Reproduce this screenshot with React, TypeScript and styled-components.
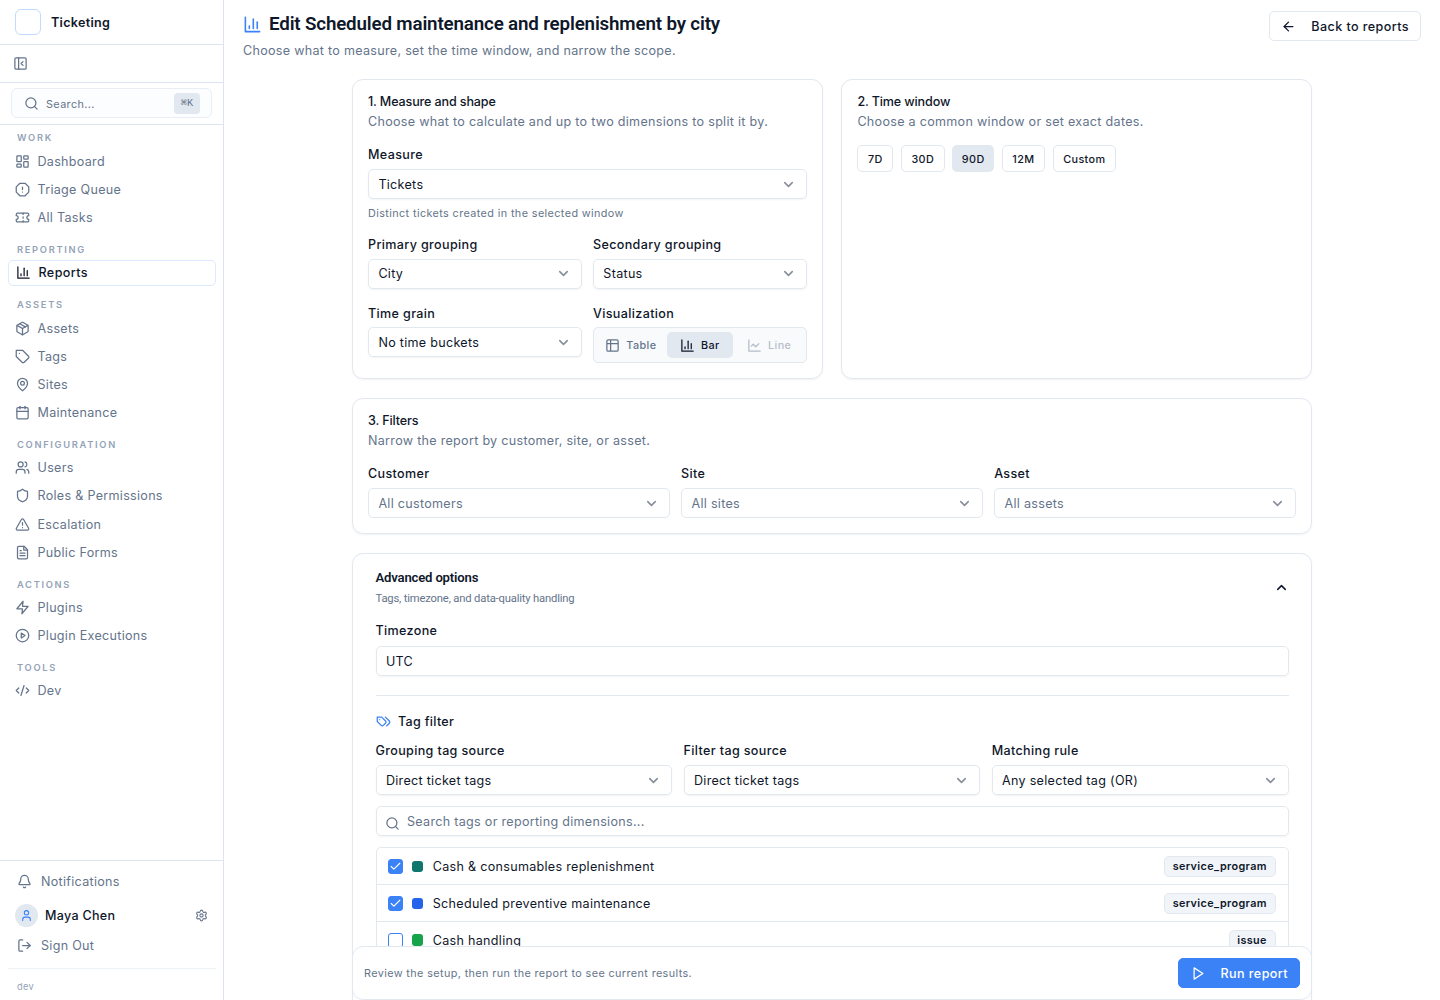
import { ReactNode } from "react";
import styled, { createGlobalStyle, css } from "styled-components";
import {
  ArrowLeft,
  Bell,
  Calendar,
  Check,
  ChevronDown,
  ChevronUp,
  CodeXml,
  LayoutDashboard,
  LogOut,
  Package,
  PanelLeftClose,
  Search,
  Settings,
  Shield,
  Table2,
  Ticket,
  TriangleAlert,
  User,
  Users,
} from "lucide-react";

const Glyph = ({ size = 15, children }: { size?: number; children: ReactNode }) => (
  <svg
    width={size}
    height={size}
    viewBox="0 0 24 24"
    fill="none"
    stroke="currentColor"
    strokeWidth="2"
    strokeLinecap="round"
    strokeLinejoin="round"
  >
    {children}
  </svg>
);

const BarIcon = ({ size }: { size?: number }) => (
  <Glyph size={size}>
    <path d="M3 3v18h18" />
    <path d="M18 17V9" />
    <path d="M13 17V5" />
    <path d="M8 17v-3" />
  </Glyph>
);

const LineIcon = () => (
  <Glyph>
    <path d="M3 3v18h18" />
    <path d="m19 9-5 5-4-4-3 3" />
  </Glyph>
);

const OctagonIcon = () => (
  <Glyph>
    <polygon points="7.86 2 16.14 2 22 7.86 22 16.14 16.14 22 7.86 22 2 16.14 2 7.86 7.86 2" />
    <path d="M12 8v4" />
    <path d="M12 16h.01" />
  </Glyph>
);

const TagIcon = () => (
  <Glyph>
    <path d="M12 2H2v10l9.29 9.29c.94.94 2.48.94 3.42 0l6.58-6.58c.94-.94.94-2.48 0-3.42L12 2Z" />
    <path d="M7 7h.01" />
  </Glyph>
);

const TagsIcon = () => (
  <Glyph>
    <path d="M9 5H2v7l6.29 6.29c.94.94 2.48.94 3.42 0l3.58-3.58c.94-.94.94-2.48 0-3.42L9 5Z" />
    <path d="M6 9.01V9" />
    <path d="m15 5 6.3 6.3a2.4 2.4 0 0 1 0 3.4L17 19" />
  </Glyph>
);

const PinIcon = () => (
  <Glyph>
    <path d="M20 10c0 6-8 12-8 12s-8-6-8-12a8 8 0 0 1 16 0Z" />
    <circle cx="12" cy="10" r="3" />
  </Glyph>
);

const FileIcon = () => (
  <Glyph>
    <path d="M14.5 2H6a2 2 0 0 0-2 2v16a2 2 0 0 0 2 2h12a2 2 0 0 0 2-2V7.5L14.5 2z" />
    <path d="M14 2v6h6" />
    <path d="M16 13H8" />
    <path d="M16 17H8" />
    <path d="M10 9H8" />
  </Glyph>
);

const ZapIcon = () => (
  <Glyph>
    <polygon points="13 2 3 14 12 14 11 22 21 10 12 10 13 2" />
  </Glyph>
);

const PlayCircleIcon = () => (
  <Glyph>
    <circle cx="12" cy="12" r="10" />
    <polygon points="10 8 16 12 10 16 10 8" />
  </Glyph>
);

const PlayIcon = () => (
  <Glyph>
    <polygon points="5 3 19 12 5 21 5 3" />
  </Glyph>
);

const sections = [
  {
    title: "Work",
    items: [
      { label: "Dashboard", icon: <LayoutDashboard size={15} /> },
      { label: "Triage Queue", icon: <OctagonIcon /> },
      { label: "All Tasks", icon: <Ticket size={15} /> },
    ],
  },
  { title: "Reporting", items: [{ label: "Reports", icon: <BarIcon />, active: true }] },
  {
    title: "Assets",
    items: [
      { label: "Assets", icon: <Package size={15} /> },
      { label: "Tags", icon: <TagIcon /> },
      { label: "Sites", icon: <PinIcon /> },
      { label: "Maintenance", icon: <Calendar size={15} /> },
    ],
  },
  {
    title: "Configuration",
    items: [
      { label: "Users", icon: <Users size={15} /> },
      { label: "Roles & Permissions", icon: <Shield size={15} /> },
      { label: "Escalation", icon: <TriangleAlert size={15} /> },
      { label: "Public Forms", icon: <FileIcon /> },
    ],
  },
  {
    title: "Actions",
    items: [
      { label: "Plugins", icon: <ZapIcon /> },
      { label: "Plugin Executions", icon: <PlayCircleIcon /> },
    ],
  },
  { title: "Tools", items: [{ label: "Dev", icon: <CodeXml size={15} /> }] },
] as { title: string; items: { label: string; icon: ReactNode; active?: boolean }[] }[];

const tags = [
  { name: "Cash & consumables replenishment", group: "service_program", color: "#0f766e", checked: true },
  { name: "Scheduled preventive maintenance", group: "service_program", color: "#2563eb", checked: true },
  { name: "Cash handling", group: "issue", color: "#16a34a", checked: false },
];

const SelectField = ({ label, value, muted }: { label: string; value: string; muted?: boolean }) => (
  <Field>
    <Label>{label}</Label>
    <Select $muted={muted}>
      {value}
      <ChevronDown size={15} strokeWidth={2.4} />
    </Select>
  </Field>
);

const Sidebar = () => (
  <Aside>
    <Brand>
      <Logo />
      Ticketing
    </Brand>
    <CollapseRow>
      <PanelLeftClose size={15} />
    </CollapseRow>
    <SearchRow>
      <SearchBox>
        <Search size={15} />
        <span>Search...</span>
        <Kbd>⌘K</Kbd>
      </SearchBox>
    </SearchRow>
    <Nav>
      {sections.map((section) => (
        <section key={section.title}>
          <NavTitle>{section.title}</NavTitle>
          <NavList>
            {section.items.map((item) => (
              <NavItem key={item.label} $active={item.active}>
                {item.icon}
                {item.label}
              </NavItem>
            ))}
          </NavList>
        </section>
      ))}
    </Nav>
    <Account>
      <AccountRow>
        <Bell size={15} />
        Notifications
      </AccountRow>
      <Profile>
        <Avatar>
          <User size={13} />
        </Avatar>
        <span>Maya Chen</span>
        <Settings size={13} />
      </Profile>
      <AccountRow>
        <LogOut size={15} />
        Sign Out
      </AccountRow>
      <Version>dev</Version>
    </Account>
  </Aside>
);

const App = () => {
  return (
    <Layout>
      <GlobalStyle />
      <Sidebar />
      <Main>
        <PageHeader>
          <div>
            <PageTitle>
              <BarIcon size={19} />
              <h1>Edit Scheduled maintenance and replenishment by city</h1>
            </PageTitle>
            <PageDescription>
              Choose what to measure, set the time window, and narrow the scope.
            </PageDescription>
          </div>
          <BackButton>
            <ArrowLeft size={15} />
            Back to reports
          </BackButton>
        </PageHeader>

        <Content>
          <TopCards>
            <Card>
              <CardTitle>1. Measure and shape</CardTitle>
              <CardText>Choose what to calculate and up to two dimensions to split it by.</CardText>
              <SelectField label="Measure" value="Tickets" />
              <Hint>Distinct tickets created in the selected window</Hint>
              <Grid $cols={2}>
                <SelectField label="Primary grouping" value="City" />
                <SelectField label="Secondary grouping" value="Status" />
                <SelectField label="Time grain" value="No time buckets" />
                <Field>
                  <Label>Visualization</Label>
                  <Segments>
                    <Segment>
                      <Table2 size={15} />
                      <span>Table</span>
                    </Segment>
                    <Segment $state="active">
                      <BarIcon />
                      <span>Bar</span>
                    </Segment>
                    <Segment $state="disabled">
                      <LineIcon />
                      <span>Line</span>
                    </Segment>
                  </Segments>
                </Field>
              </Grid>
            </Card>
            <Card>
              <CardTitle>2. Time window</CardTitle>
              <CardText>Choose a common window or set exact dates.</CardText>
              <Presets>
                {["7D", "30D", "90D", "12M", "Custom"].map((preset) => (
                  <Preset key={preset} $active={preset === "90D"}>
                    {preset}
                  </Preset>
                ))}
              </Presets>
            </Card>
          </TopCards>

          <Card>
            <CardTitle>3. Filters</CardTitle>
            <CardText>Narrow the report by customer, site, or asset.</CardText>
            <Grid $cols={3}>
              <SelectField label="Customer" value="All customers" muted />
              <SelectField label="Site" value="All sites" muted />
              <SelectField label="Asset" value="All assets" muted />
            </Grid>
          </Card>

          <AdvancedCard>
            <AdvancedHeader>
              <div>
                <h2>Advanced options</h2>
                <p>Tags, timezone, and data-quality handling</p>
              </div>
              <ChevronUp size={15} strokeWidth={2.4} />
            </AdvancedHeader>
            <TimezoneField>
              <Label>Timezone</Label>
              <Input>UTC</Input>
            </TimezoneField>
            <Divider />
            <TagHeading>
              <TagsIcon />
              Tag filter
            </TagHeading>
            <Grid $cols={3}>
              <SelectField label="Grouping tag source" value="Direct ticket tags" />
              <SelectField label="Filter tag source" value="Direct ticket tags" />
              <SelectField label="Matching rule" value="Any selected tag (OR)" />
            </Grid>
            <TagSearch>
              <Search size={15} />
              Search tags or reporting dimensions...
            </TagSearch>
            <TagList>
              {tags.map((tag) => (
                <TagRow key={tag.name}>
                  <Checkbox $checked={tag.checked}>{tag.checked && <Check size={13} />}</Checkbox>
                  <Swatch $color={tag.color} />
                  <span>{tag.name}</span>
                  <Badge>{tag.group}</Badge>
                </TagRow>
              ))}
            </TagList>
          </AdvancedCard>

          <ActionBar>
            <p>Review the setup, then run the report to see current results.</p>
            <RunButton>
              <PlayIcon />
              Run report
            </RunButton>
          </ActionBar>
        </Content>
      </Main>
    </Layout>
  );
};

export default App;

const GlobalStyle = createGlobalStyle`
  * {
    box-sizing: border-box;
  }

  body {
    margin: 0;
    overflow: hidden;
    background-color: #fff;
    color: #0f172a;
    font-family: Inter, sans-serif;
    font-size: 12.55px;
    letter-spacing: 0.3px;
  }

  h1, h2, p {
    margin: 0;
  }

  svg {
    flex-shrink: 0;
  }
`;

const smallText = css`
  font-size: 10.8px;
  letter-spacing: 0.4px;
`;

const Layout = styled.div`
  display: flex;
  height: 1000px;
  overflow: hidden;
`;

const Aside = styled.aside`
  display: flex;
  flex-direction: column;
  flex-shrink: 0;
  width: 224px;
  border-right: 1px solid #dbe4f0;
  color: #64748b;
`;

const Brand = styled.div`
  display: flex;
  align-items: center;
  gap: 10px;
  height: 45px;
  padding: 0 15px;
  border-bottom: 1px solid #dbe4f0;
  color: #0f172a;
  font-weight: 600;
`;

const Logo = styled.div`
  width: 26px;
  height: 26px;
  border: 1px solid #bfdbfe;
  border-radius: 6px;
`;

const CollapseRow = styled.div`
  display: flex;
  align-items: center;
  height: 38px;
  padding-left: 13px;
  border-bottom: 1px solid #dbe4f0;
`;

const SearchRow = styled.div`
  height: 42px;
  padding: 5px 11px;
  border-bottom: 1px solid #dbe4f0;
`;

const SearchBox = styled.div`
  display: flex;
  align-items: center;
  gap: 7px;
  height: 30px;
  padding: 0 11px 0 12px;
  border: 1px solid #e9eef5;
  border-radius: 6px;
  background-color: #fcfdfe;
  ${smallText}

  span {
    flex: 1;
    padding-top: 2px;
  }
`;

const Kbd = styled.kbd`
  width: 26px;
  border-radius: 4px;
  background-color: #e2e8f0;
  font-family: "Liberation Mono", monospace;
  font-size: 10.3px;
  letter-spacing: 0;
  line-height: 21px;
  text-align: center;
`;

const Nav = styled.nav`
  flex: 1;
  display: flex;
  flex-direction: column;
  gap: 11.25px;
  padding: 5.4px 7px 0 8px;
`;

const NavTitle = styled.div`
  padding-left: 9px;
  margin-bottom: 2.8px;
  color: #94a3b8;
  font-size: 9.3px;
  font-weight: 600;
  letter-spacing: 1.7px;
  line-height: 15px;
  text-transform: uppercase;
`;

const NavList = styled.div`
  display: flex;
  flex-direction: column;
  gap: 1.875px;
`;

const NavItem = styled.a<{ $active?: boolean }>`
  display: flex;
  align-items: center;
  gap: 7.5px;
  height: 26.25px;
  padding: 0 7px;

  ${({ $active }) =>
    $active &&
    css`
      border: 1px solid #dbeafe;
      border-radius: 5px;
      color: #0f172a;
      font-weight: 500;
      letter-spacing: 0.4px;
    `}
`;

const Account = styled.div`
  height: 140px;
  padding: 6.4px 7px 0 8px;
  border-top: 1px solid #dbe4f0;
`;

const AccountRow = styled.div`
  display: flex;
  align-items: center;
  gap: 9px;
  height: 28px;
  padding-left: 9px;
`;

const Profile = styled.div`
  display: flex;
  align-items: center;
  gap: 7px;
  height: 36px;
  padding: 4px 8px 0 7px;

  span {
    flex: 1;
    color: #0f172a;
    font-weight: 500;
  }
`;

const Avatar = styled.div`
  display: flex;
  align-items: center;
  justify-content: center;
  width: 23px;
  height: 23px;
  border-radius: 50%;
  background-color: #e2e8f0;
  color: #3b82f6;
`;

const Version = styled.div`
  margin-top: 8.6px;
  padding: 11px 9px 0;
  border-top: 1px solid #edf2f7;
  color: #94a3b8;
  font-size: 9.2px;
  line-height: 14px;
`;

const Main = styled.main`
  flex: 1;
  display: flex;
  flex-direction: column;
  min-width: 0;
`;

const PageHeader = styled.header`
  display: flex;
  justify-content: space-between;
  height: 79px;
  padding: 11px 19px 0;
`;

const PageTitle = styled.div`
  display: flex;
  align-items: center;
  gap: 7px;
  height: 26px;
  color: #3b82f6;

  h1 {
    color: #0f172a;
    font-family: Roboto, sans-serif;
    font-size: 18.75px;
    font-weight: 600;
    letter-spacing: -0.16px;
  }
`;

const PageDescription = styled.p`
  margin-top: 4px;
  color: #64748b;
  line-height: 19px;
`;

const BackButton = styled.button`
  display: flex;
  align-items: center;
  gap: 15px;
  height: 30px;
  padding: 0 11px;
  border: 1px solid #e2e8f0;
  border-radius: 5px;
  background-color: #fff;
  color: #0f172a;
  font: inherit;
  font-weight: 500;
  letter-spacing: 0.42px;
`;

const Content = styled.div`
  flex: 1;
  display: flex;
  flex-direction: column;
  gap: 19px;
  width: 960px;
  min-height: 0;
  margin: 0 auto;
`;

const Grid = styled.div<{ $cols: number }>`
  display: grid;
  grid-template-columns: repeat(${({ $cols }) => $cols}, 1fr);
  gap: 17px 11.25px;
`;

const TopCards = styled(Grid).attrs({ $cols: 2 })`
  flex-shrink: 0;
  column-gap: 18.75px;
  height: 300px;
`;

const Card = styled.section`
  flex-shrink: 0;
  padding: 15px;
  border: 1px solid #e2e8f0;
  border-radius: 11px;
  box-shadow: 0 1px 2px rgba(15, 23, 42, 0.06);
`;

const CardTitle = styled.h2`
  font-size: 12.55px;
  font-weight: 500;
  letter-spacing: -0.13px;
  line-height: 13px;
`;

const CardText = styled.p`
  margin: 4px 0 16.3px;
  color: #64748b;
  line-height: 19px;
`;

const Field = styled.div`
  display: flex;
  flex-direction: column;
`;

const TimezoneField = styled(Field)`
  gap: 1.1px;
`;

const Label = styled.label`
  margin-bottom: 6.6px;
  font-weight: 500;
  letter-spacing: 0.36px;
  line-height: 15px;
`;

const Input = styled.div`
  display: flex;
  align-items: center;
  height: 30px;
  padding: 0.6px 10px 0 9.375px;
  border: 1px solid #e2e8f0;
  border-radius: 5px;
  box-shadow: 0 1px 2px rgba(15, 23, 42, 0.05);
`;

const Select = styled(Input)<{ $muted?: boolean }>`
  justify-content: space-between;
  color: ${({ $muted }) => ($muted ? "#64748b" : "#0f172a")};
  box-shadow: ${({ $muted }) => ($muted ? "none" : "0 1px 2px rgba(15, 23, 42, 0.05)")};

  svg {
    color: #858b98;
  }
`;

const Hint = styled.p`
  margin: 7px 0 16.1px;
  color: #64748b;
  ${smallText}
  line-height: 15px;
`;

const Segments = styled.div`
  display: grid;
  grid-template-columns: 1fr 66px 1fr;
  height: 36px;
  padding: 4px;
  border: 1px solid #e2e8f0;
  border-radius: 5px;
  background-color: #f8fafc;
`;

const Segment = styled.div<{ $state?: "active" | "disabled" }>`
  display: flex;
  align-items: center;
  justify-content: center;
  gap: 6px;
  height: 26px;
  border-radius: 5px;
  background-color: ${({ $state }) => ($state === "active" ? "#e2e8f0" : "transparent")};
  color: ${({ $state }) => ($state === "active" ? "#0f172a" : "#64748b")};
  opacity: ${({ $state }) => ($state === "disabled" ? 0.45 : 1)};
  ${smallText}
  font-weight: 500;

  span {
    padding-top: 1.5px;
  }

  &:first-child {
    padding-right: 3px;
  }

  &:last-child {
    padding-left: 4px;
  }
`;

const Presets = styled.div`
  display: flex;
  gap: 7.5px;
  margin-top: -2px;
`;

const Preset = styled.div<{ $active?: boolean }>`
  height: 27px;
  padding: 0 9.6px;
  border: ${({ $active }) => ($active ? "0" : "1px solid #e2e8f0")};
  border-radius: 5px;
  background-color: ${({ $active }) => ($active ? "#e2e8f0" : "#fff")};
  ${smallText}
  font-weight: 500;
  line-height: ${({ $active }) => ($active ? "29px" : "27px")};
`;

const AdvancedCard = styled(Card)`
  flex: 1;
  min-height: 0;
  /* runs on underneath the action bar */
  margin-bottom: -83px;
  padding: 14px 22.5px 0;
  overflow: hidden;
`;

const AdvancedHeader = styled.div`
  display: flex;
  align-items: center;
  justify-content: space-between;
  margin-bottom: 17.3px;
  font-family: Roboto, sans-serif;
  letter-spacing: -0.18px;

  h2 {
    font-size: 13.125px;
    font-weight: 600;
    line-height: 19px;
  }

  p {
    margin-top: 4px;
    color: #64748b;
    font-size: 11.25px;
    line-height: 15px;
  }

  svg {
    margin-top: 2px;
  }
`;

const Divider = styled.hr`
  width: 100%;
  margin: 19.1px 0 17px;
  border: 0;
  border-top: 1px solid #e2e8f0;
`;

const TagHeading = styled.div`
  display: flex;
  align-items: center;
  gap: 7.5px;
  margin-bottom: 13.3px;
  font-weight: 500;
  line-height: 17px;

  svg {
    color: #3b82f6;
  }
`;

const TagSearch = styled(Input)`
  gap: 7px;
  margin-top: 11.1px;
  padding-left: 8.5px;
  color: #64748b;

  svg {
    margin-top: 4px;
  }
`;

const TagList = styled.div`
  margin-top: 11.2px;
  border: 1px solid #e2e8f0;
  border-radius: 5px 5px 0 0;
`;

const TagRow = styled.div`
  display: flex;
  align-items: center;
  height: 36.75px;
  padding: 1.2px 12px 0 11.25px;
  border-bottom: 1px solid #e2e8f0;

  span {
    flex: 1;
    margin-left: 9.375px;
  }
`;

const Checkbox = styled.div<{ $checked: boolean }>`
  display: flex;
  align-items: center;
  justify-content: center;
  width: 15px;
  height: 15px;
  margin-right: 9.375px;
  border: 1px solid #3b82f6;
  border-radius: 3px;
  background-color: ${({ $checked }) => ($checked ? "#3b82f6" : "#fff")};
  color: #fff;
`;

const Swatch = styled.div<{ $color: string }>`
  width: 11.25px;
  height: 11.25px;
  border-radius: 3px;
  background-color: ${({ $color }) => $color};
`;

const Badge = styled.div`
  height: 21px;
  padding: 0 7.6px;
  border: 1px solid #e2e8f0;
  border-radius: 5px;
  background-color: #f1f5f9;
  ${smallText}
  font-weight: 600;
  line-height: 20px;
`;

const ActionBar = styled.footer`
  position: sticky;
  bottom: 0;
  display: flex;
  flex-shrink: 0;
  align-items: center;
  justify-content: space-between;
  height: 54px;
  padding: 0 11px;
  border: 1px solid #e2e8f0;
  border-radius: 11px;
  background-color: #fff;

  p {
    color: #64748b;
    ${smallText}
  }
`;

const RunButton = styled(BackButton)`
  padding: 0 11px 0 12px;
  border-color: #3b82f6;
  background-color: #3b82f6;
  color: #fff;
`;
